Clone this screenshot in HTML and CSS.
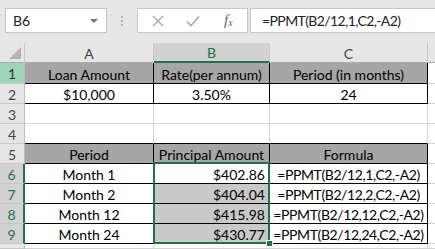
FILE: index.html
```html
<!DOCTYPE html>
<html>
<head>
    <title>PPMT</title>
    <link rel="stylesheet" href="styles.css">
</head>
<body>
    <div class="fbar">
        <div class="namebox"><span>B6</span><span class="caret"></span></div>
        <div class="grip"><i></i><i></i><i></i></div>
        <div class="tools">
            <svg width="12" height="12" viewBox="0 0 12 12"><path d="M1 1L11 11M11 1L1 11" stroke="#a6a6a6" stroke-width="1.4" fill="none"/></svg>
            <svg width="14" height="12" viewBox="0 0 14 12"><path d="M1 6.5L5 10.5L13 1.5" stroke="#a6a6a6" stroke-width="1.6" fill="none"/></svg>
            <span class="fx">f<sub>x</sub></span>
        </div>
        <div class="formula">=PPMT(B2/12,1,C2,-A2)</div>
    </div>

    <div class="sheet">
        <!-- column headers -->
        <div class="hd corner"><span class="tri"></span></div>
        <div class="hd">A</div>
        <div class="hd on-col">B</div>
        <div class="hd">C</div>
        <div class="hd"></div>

        <!-- row 1 -->
        <div class="rh on-row1">1</div>
        <div class="c k fill">Loan Amount</div>
        <div class="c k fill">Rate(per annum)</div>
        <div class="c k fill">Period (in months)</div>
        <div class="c"></div>

        <!-- row 2 -->
        <div class="rh">2</div>
        <div class="c k">$10,000</div>
        <div class="c k">3.50%</div>
        <div class="c k">24</div>
        <div class="c"></div>

        <!-- rows 3-4 -->
        <div class="rh">3</div>
        <div class="c"></div>
        <div class="c"></div>
        <div class="c"></div>
        <div class="c"></div>

        <div class="rh">4</div>
        <div class="c top"></div>
        <div class="c top"></div>
        <div class="c top"></div>
        <div class="c"></div>

        <!-- row 5 -->
        <div class="rh">5</div>
        <div class="c k fill">Period</div>
        <div class="c k fill">Principal Amount</div>
        <div class="c k fill">Formula</div>
        <div class="c"></div>

        <!-- rows 6-9 -->
        <div class="rh on">6</div>
        <div class="c k">Month 1</div>
        <div class="c k num">$402.86</div>
        <div class="c k f">=PPMT(B2/12,1,C2,-A2)</div>
        <div class="c"></div>

        <div class="rh on">7</div>
        <div class="c k">Month 2</div>
        <div class="c k num shade">$404.04</div>
        <div class="c k f">=PPMT(B2/12,2,C2,-A2)</div>
        <div class="c"></div>

        <div class="rh on">8</div>
        <div class="c k">Month 12</div>
        <div class="c k num shade">$415.98</div>
        <div class="c k f">=PPMT(B2/12,12,C2,-A2)</div>
        <div class="c"></div>

        <div class="rh on">9</div>
        <div class="c k">Month 24</div>
        <div class="c k num shade">$430.77</div>
        <div class="c k f">=PPMT(B2/12,24,C2,-A2)</div>
        <div class="c"></div>

        <!-- row 10, cut by the window -->
        <div class="rh"></div>
        <div class="c"></div>
        <div class="c"></div>
        <div class="c"></div>
        <div class="c"></div>

        <!-- selection B6:B9 -->
        <div class="sel"><span class="handle"></span></div>
    </div>
</body>
</html>
```

FILE: styles.css
```css
body {
    margin: 0;
    width: 435px;
    height: 249px;
    overflow: hidden;
    font-family: Lato, "Liberation Sans", sans-serif;
    background-color: #ffffff;
}

/* formula bar */
.fbar {
    display: flex;
    height: 43px;
    padding: 8px 0 0 5px;
    box-sizing: border-box;
    background-color: #e6e6e6;
}
.namebox {
    display: flex;
    align-items: center;
    justify-content: space-between;
    width: 102px;
    height: 25px;
    padding: 0 8px 0 7px;
    box-sizing: border-box;
    background-color: white;
    border: 1px solid #c6c6c6;
    font-size: 14px;
    color: #222;
}
.caret {
    width: 0;
    height: 0;
    border-left: 4px solid transparent;
    border-right: 4px solid transparent;
    border-top: 4px solid #777;
}
.grip {
    width: 30px;
    height: 25px;
    display: flex;
    flex-direction: column;
    align-items: center;
    justify-content: center;
    gap: 2px;
}
.grip i {
    width: 2px;
    height: 2px;
    background-color: #b3b3b3;
}
.tools {
    display: flex;
    align-items: center;
    width: 111px;
    height: 25px;
    box-sizing: border-box;
    padding-left: 14px;
    gap: 22px;
    background-color: white;
    border: 1px solid #c6c6c6;
}
.fx {
    font-family: "Liberation Serif", serif;
    font-style: italic;
    font-size: 15px;
    color: #666;
    margin-left: 2px;
}
.fx sub {
    font-size: 10px;
    vertical-align: -1px;
}
.formula {
    flex: 1;
    height: 25px;
    margin-left: 2px;
    padding-left: 11px;
    box-sizing: border-box;
    display: flex;
    align-items: center;
    background-color: white;
    border: 1px solid #c6c6c6;
    border-right: none;
    font-size: 14px;
    letter-spacing: -0.6px;
    color: #222;
    white-space: nowrap;
}

/* sheet grid */
.sheet {
    position: relative;
    display: grid;
    grid-template-columns: 25px 129px 116px 158px 20px;
    grid-template-rows: 20px 21px repeat(8, 20px) 5px;
    font-size: 14px;
}
.sheet > div {
    box-sizing: border-box;
    display: flex;
    align-items: center;
    justify-content: center;
    white-space: nowrap;
    overflow: hidden;
}
.hd {
    background-color: #e6e6e6;
    border-right: 1px solid #c8c8c8;
    border-bottom: 1px solid #ababab;
    color: #444;
    padding-top: 1px;
}
.corner {
    position: relative;
}
.tri {
    position: absolute;
    right: 3px;
    bottom: 3px;
    width: 0;
    height: 0;
    border-left: 12px solid transparent;
    border-bottom: 12px solid #b4b4b4;
}
.on-col {
    background-color: #d2d2d2;
    color: #217346;
    border-bottom: 2px solid #217346;
}
.rh {
    background-color: #e6e6e6;
    border-right: 1px solid #c0c0c0;
    border-bottom: 1px solid #c8c8c8;
    color: #444;
    padding-top: 1px;
}
.on-row1 {
    background-color: #9fd5b7;
    color: #333;
}
.rh.on {
    background-color: #d2d2d2;
    color: #217346;
    border-right: 2px solid #217346;
}
.c {
    border-right: 1px solid #d4d4d4;
    border-bottom: 1px solid #d4d4d4;
    color: #000;
    padding-top: 2px;
}
.c.top {
    border-bottom-color: #000;
}
.c.k {
    border-right-color: #000;
    border-bottom-color: #000;
}
.c.f {
    letter-spacing: -0.4px;
}
.fill {
    background-color: #a6a6a6;
}
.shade {
    background-color: #c9c9c9;
}
.sheet > .num {
    justify-content: flex-end;
    padding-right: 4px;
}

/* selected range B6:B9 */
.sel {
    position: absolute;
    left: 153px;
    top: 119px;
    width: 117px;
    height: 82px;
    border: 2px solid #217346;
    box-sizing: border-box;
    overflow: visible !important;
}
.handle {
    position: absolute;
    right: -5px;
    bottom: -5px;
    width: 5px;
    height: 5px;
    background-color: #217346;
    border: 1px solid white;
}
```
